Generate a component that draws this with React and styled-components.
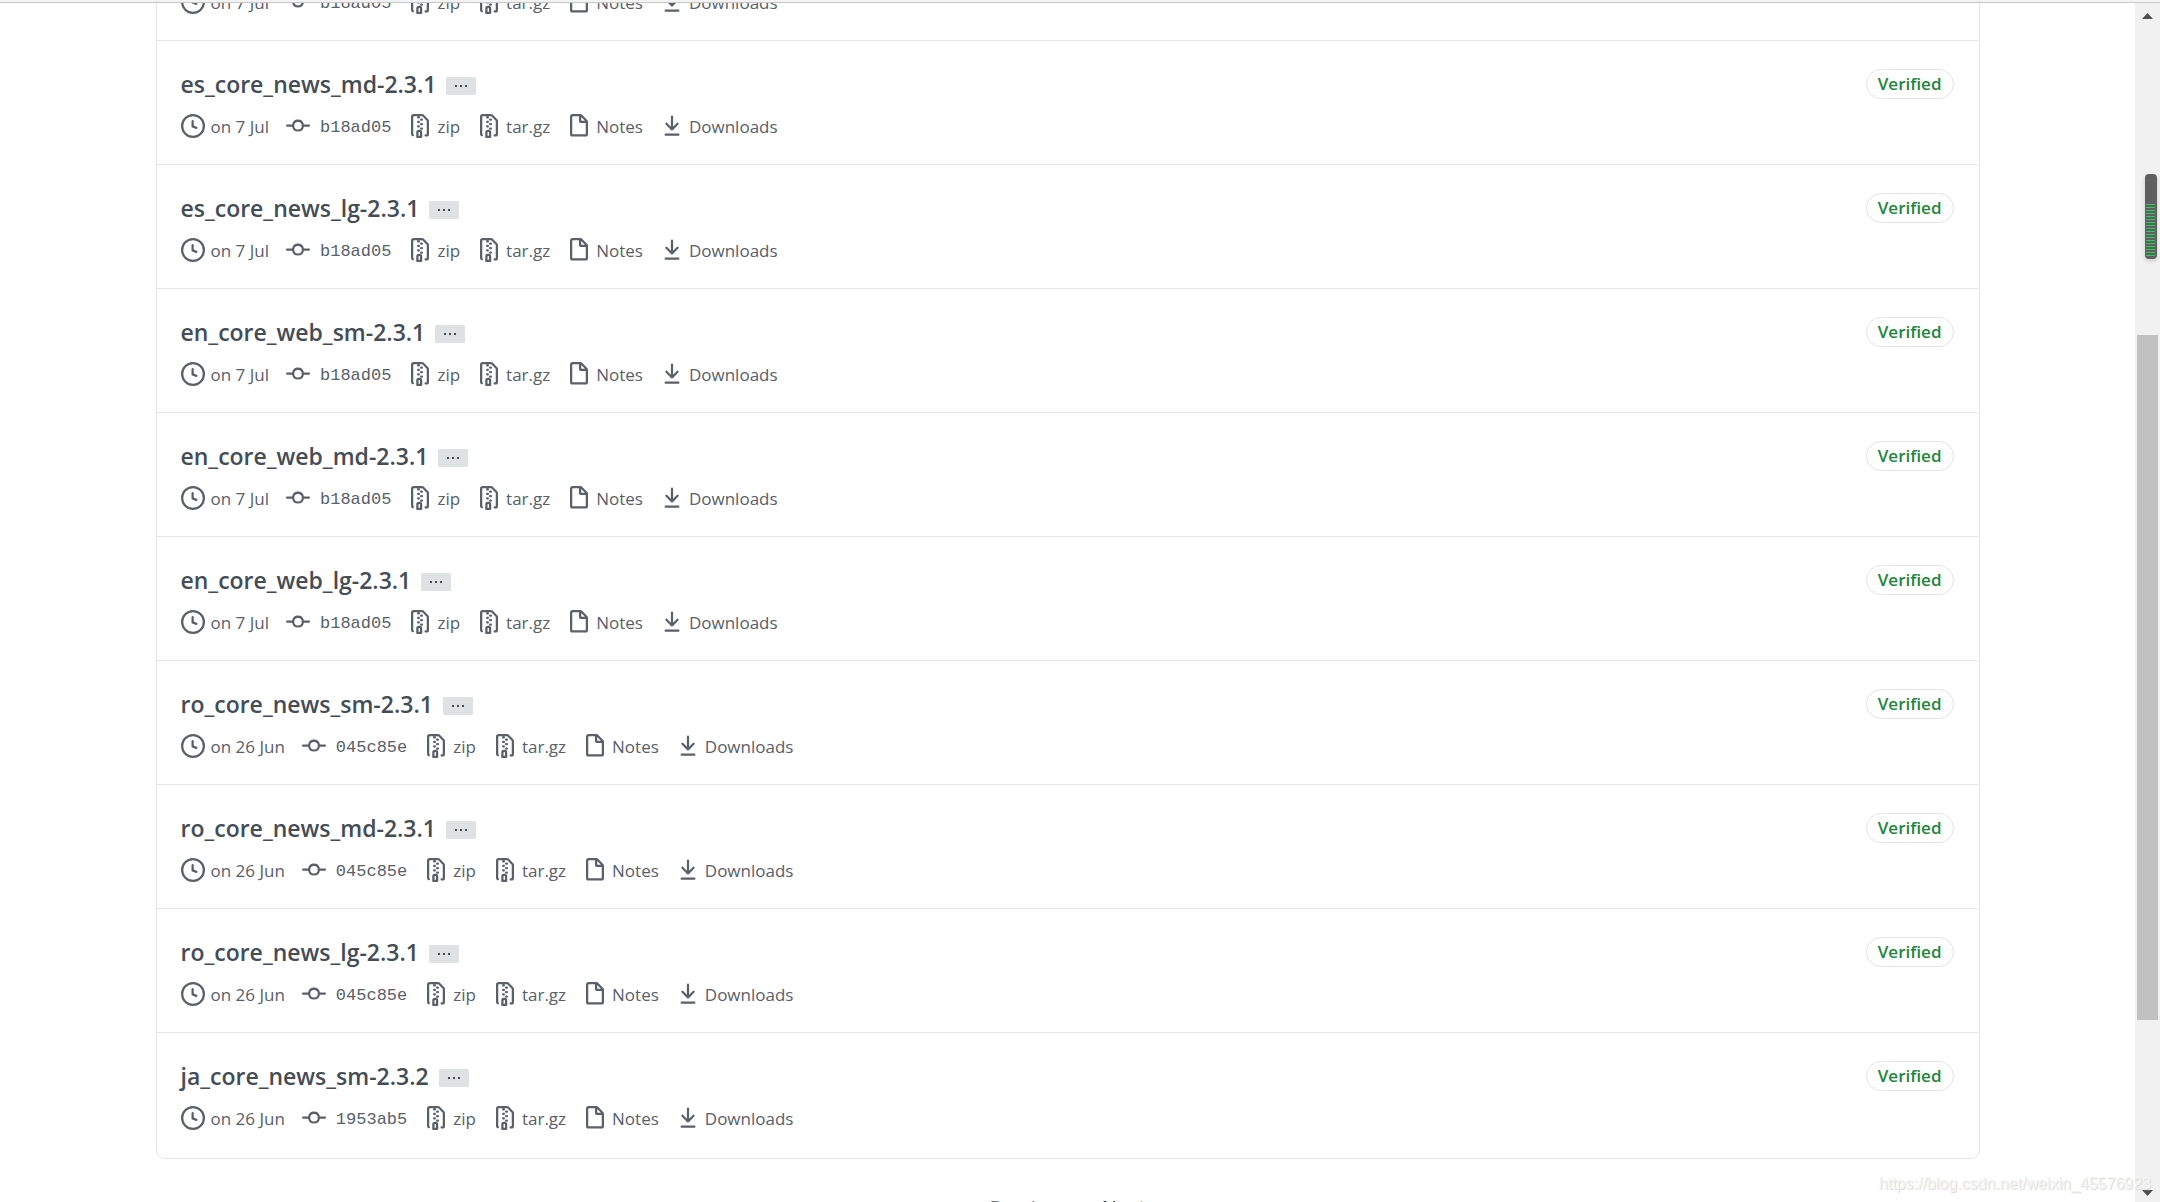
import React from "react";
import styled, {createGlobalStyle} from "styled-components";

const tags = [
    {name: "es_core_news_sm-2.3.1", date: "on 7 Jul", commit: "b18ad05"},
    {name: "es_core_news_md-2.3.1", date: "on 7 Jul", commit: "b18ad05"},
    {name: "es_core_news_lg-2.3.1", date: "on 7 Jul", commit: "b18ad05"},
    {name: "en_core_web_sm-2.3.1", date: "on 7 Jul", commit: "b18ad05"},
    {name: "en_core_web_md-2.3.1", date: "on 7 Jul", commit: "b18ad05"},
    {name: "en_core_web_lg-2.3.1", date: "on 7 Jul", commit: "b18ad05"},
    {name: "ro_core_news_sm-2.3.1", date: "on 26 Jun", commit: "045c85e"},
    {name: "ro_core_news_md-2.3.1", date: "on 26 Jun", commit: "045c85e"},
    {name: "ro_core_news_lg-2.3.1", date: "on 26 Jun", commit: "045c85e"},
    {name: "ja_core_news_sm-2.3.2", date: "on 26 Jun", commit: "1953ab5"},
];

const icons = {
    clock: "M1.5 8a6.5 6.5 0 1113 0 6.5 6.5 0 01-13 0zM8 0a8 8 0 100 16A8 8 0 008 0zm.5 4.75a.75.75 0 00-1.5 0v3.5a.75.75 0 00.471.696l2.5 1a.75.75 0 00.557-1.392L8.5 7.742V4.75z",
    commit: "M10.5 7.75a2.5 2.5 0 11-5 0 2.5 2.5 0 015 0zm1.43.75a4.002 4.002 0 01-7.86 0H.75a.75.75 0 110-1.5h3.32a4.001 4.001 0 017.86 0h3.32a.75.75 0 110 1.5h-3.32z",
    zip: "M3.5 1.75a.25.25 0 01.25-.25h3a.75.75 0 000 1.5h.5a.75.75 0 000-1.5h2.086a.25.25 0 01.177.073l2.914 2.914a.25.25 0 01.073.177v8.586a.25.25 0 01-.25.25h-.5a.75.75 0 000 1.5h.5A1.75 1.75 0 0014 13.25V4.664c0-.464-.184-.909-.513-1.237L10.573.513A1.75 1.75 0 009.336 0H3.75A1.75 1.75 0 002 1.75v11.5c0 .649.353 1.214.874 1.515a.75.75 0 10.752-1.298.25.25 0 01-.126-.217V1.75zM8.75 3a.75.75 0 000 1.5h.5a.75.75 0 000-1.5h-.5zM6 5.25a.75.75 0 01.75-.75h.5a.75.75 0 010 1.5h-.5A.75.75 0 016 5.25zm2 1.5A.75.75 0 018.75 6h.5a.75.75 0 010 1.5h-.5A.75.75 0 018 6.75zm-1.25.75a.75.75 0 000 1.5h.5a.75.75 0 000-1.5h-.5zM8 9.75A.75.75 0 018.75 9h.5a.75.75 0 010 1.5h-.5A.75.75 0 018 9.75zm-.75.75a1.75 1.75 0 00-1.75 1.75v3c0 .414.336.75.75.75h2.5a.75.75 0 00.75-.75v-3a1.75 1.75 0 00-1.75-1.75h-.5zM7 12.25a.25.25 0 01.25-.25h.5a.25.25 0 01.25.25v2.25H7v-2.25z",
    file: "M3.75 1.5a.25.25 0 00-.25.25v11.5c0 .138.112.25.25.25h8.5a.25.25 0 00.25-.25V6H9.75A1.75 1.75 0 018 4.25V1.5H3.75zm5.75.56v2.19c0 .138.112.25.25.25h2.19L9.5 2.06zM2 1.75C2 .784 2.784 0 3.75 0h5.086c.464 0 .909.184 1.237.513l3.414 3.414c.329.328.513.773.513 1.237v8.086A1.75 1.75 0 0112.25 15h-8.5A1.75 1.75 0 012 13.25V1.75z",
    download: "M7.47 10.78a.75.75 0 001.06 0l3.75-3.75a.75.75 0 00-1.06-1.06L8.75 8.44V1.75a.75.75 0 00-1.5 0v6.69L4.78 5.97a.75.75 0 00-1.06 1.06l3.75 3.75zM3.75 13a.75.75 0 000 1.5h8.5a.75.75 0 000-1.5h-8.5z",
};

const Icon = ({name}) => (
    <IconSvg viewBox="0 0 16 16" aria-hidden="true">
        <path fillRule="evenodd" d={icons[name]}/>
    </IconSvg>
);

const TagRow = ({tag}) => (
    <Row>
        <div>
            <TitleLine>
                <Title><a href="#tag">{tag.name}</a></Title>
                <Expander type="button" aria-label="Toggle commit message">
                    <svg width="12" height="2" viewBox="0 0 12 2" aria-hidden="true">
                        <path d="M0 0h2v2H0zM5 0h2v2H5zM10 0h2v2h-2z"/>
                    </svg>
                </Expander>
            </TitleLine>
            <Meta>
                <MetaItem><Icon name="clock"/><Label>{tag.date}</Label></MetaItem>
                <MetaItem><MetaLink href="#commit" $wide><Icon name="commit"/><Sha>{tag.commit}</Sha></MetaLink></MetaItem>
                <MetaItem><MetaLink href="#zip"><Icon name="zip"/><Label>zip</Label></MetaLink></MetaItem>
                <MetaItem><MetaLink href="#tar"><Icon name="zip"/><Label>tar.gz</Label></MetaLink></MetaItem>
                <MetaItem><MetaLink href="#notes"><Icon name="file"/><Label>Notes</Label></MetaLink></MetaItem>
                <MetaItem><MetaLink href="#downloads"><Icon name="download"/><Label>Downloads</Label></MetaLink></MetaItem>
            </Meta>
        </div>
        <Verified type="button">Verified</Verified>
    </Row>
);

const App = () => {
    return (
        <>
            <GlobalStyle/>
            <Window>
                <TopEdge/>
                <Body>
                    <Content>
                        <TagList>
                            {tags.map((tag) => (
                                <TagRow key={tag.name} tag={tag}/>
                            ))}
                        </TagList>
                        <Pagination>
                            <PageLabel>Previous</PageLabel>
                            <PageLink href="#next">Next</PageLink>
                        </Pagination>
                    </Content>
                    <Scrollbar>
                        <ScrollButton type="button" aria-label="Scroll up">
                            <svg width="11" height="6" viewBox="0 0 22 12"><path d="M0 12 11 0l11 12z"/></svg>
                        </ScrollButton>
                        <Track><Thumb/></Track>
                        <ScrollButton type="button" aria-label="Scroll down">
                            <svg width="11" height="6" viewBox="0 0 22 12"><path d="M0 0h22L11 12z"/></svg>
                        </ScrollButton>
                    </Scrollbar>
                </Body>
                <Meter><MeterFill/></Meter>
                <Watermark>https://blog.csdn.net/weixin_45576923</Watermark>
            </Window>
        </>
    );
};

const GlobalStyle = createGlobalStyle`
  * {
    box-sizing: border-box;
  }

  body {
    margin: 0;
    background: #fff;
    color: #586069;
    font-family: "Segoe UI", "Open Sans", "Noto Sans", sans-serif;
    font-size: 17px;
  }

  a {
    color: inherit;
    text-decoration: none;
  }

  button {
    border: 0;
    padding: 0;
    font-family: inherit;
    cursor: pointer;
  }
`;

const Window = styled.div`
  position: relative;
  display: flex;
  flex-direction: column;
  height: 100vh;
  overflow: hidden;
`;

const TopEdge = styled.div`
  flex: none;
  height: 3px;
  background: #f3f3f3;
  border-bottom: 1px solid #c8c8c8;
`;

const Body = styled.div`
  display: flex;
  flex: 1;
  min-height: 0;
`;

const Content = styled.main`
  flex: 1;
  overflow: hidden;
  padding: 0 48px;
`;

/* the page is scrolled most of the way past the first row */
const TagList = styled.ul`
  list-style: none;
  max-width: 1824px;
  margin: -87px auto 0;
  padding: 0;
  border: 1px solid #e1e4e8;
  border-radius: 9px;
`;

const Row = styled.li`
  display: flex;
  justify-content: space-between;
  align-items: flex-start;
  margin-right: 1px;
  padding: 28px 24px 26px;
  border-bottom: 1px solid #e1e4e8;

  &:last-child {
    border-bottom: 0;
    padding-bottom: 28px;
  }
`;

const TitleLine = styled.div`
  display: flex;
  align-items: center;
  gap: 10px;
  margin-bottom: 13px;
`;

const Title = styled.h4`
  margin: 0;
  padding-bottom: 1px;
  color: #444d56;
  font-size: 23px;
  font-weight: 600;
  line-height: 31px;
`;

const Expander = styled.button`
  display: flex;
  align-items: center;
  justify-content: center;
  width: 30px;
  height: 18px;
  margin-top: 2px;
  border-radius: 1px;
  background: #dfe2e5;

  svg {
    fill: #444d56;
  }
`;

const Meta = styled.ul`
  display: flex;
  gap: 17px;
  list-style: none;
  margin: 0;
  padding: 0;
`;

const MetaItem = styled.li`
  display: flex;
  align-items: center;
  gap: 6px;
`;

const MetaLink = styled.a`
  display: flex;
  align-items: center;
  gap: ${({$wide}) => ($wide ? "10px" : "5px")};
`;

const IconSvg = styled.svg`
  flex: none;
  width: 24px;
  height: 24px;
  fill: #586069;
`;

const Label = styled.span`
  padding-top: 2px;
  line-height: 22px;
`;

const Sha = styled.code`
  padding-top: 4px;
  font-family: Consolas, "Liberation Mono", monospace;
  font-size: 17px;
  line-height: 20px;
`;

const Verified = styled.button`
  height: 30px;
  padding: 0 11px;
  border: 1px solid #e1e4e8;
  border-radius: 15px;
  background: #fff;
  color: #22863a;
  font-size: 17px;
  font-weight: 600;
  line-height: 26px;
`;

const Pagination = styled.nav`
  display: flex;
  justify-content: center;
  gap: 32px;
  margin-top: 35px;
  font-size: 20px;
  line-height: 28px;
`;

const PageLabel = styled.span`
  color: #6a737d;
`;

const PageLink = styled.a`
  color: #24292e;
`;

const Scrollbar = styled.div`
  display: flex;
  flex: none;
  flex-direction: column;
  width: 25px;
  padding-top: 4px;
  background: #f1f1f1;
`;

const ScrollButton = styled.button`
  display: flex;
  align-items: center;
  justify-content: center;
  height: 18px;
  background: transparent;

  svg {
    fill: #505050;
  }
`;

const Track = styled.div`
  flex: 1;
  padding: 310px 2px 164px;
`;

const Thumb = styled.div`
  height: 100%;
  background: #c1c1c1;
`;

const Meter = styled.div`
  position: absolute;
  top: 174px;
  right: 3px;
  width: 12px;
  height: 85px;
  padding: 30px 2px 2px 1px;
  border-radius: 4px;
  background: #606060;
  box-shadow: 0 2px 4px rgba(0, 0, 0, 0.15);
`;

const MeterFill = styled.div`
  height: 100%;
  background: repeating-linear-gradient(#2fca62 0 1px, #606060 1px 3px);
`;

const Watermark = styled.div`
  position: absolute;
  right: 9px;
  bottom: 8px;
  color: #f4f4f4;
  font-family: Arial, "Liberation Sans", sans-serif;
  font-size: 16px;
  line-height: 20px;
  text-shadow: 1px 1px 1px #d8d8d8;
  pointer-events: none;
`;

export default App;
